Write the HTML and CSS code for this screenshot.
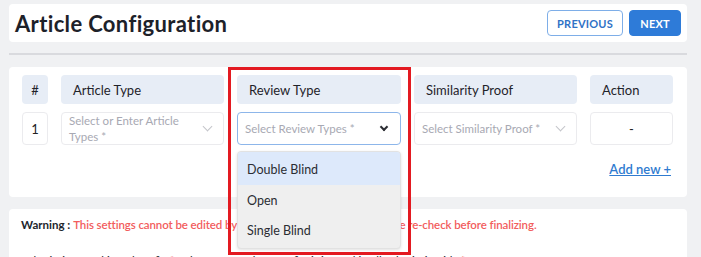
FILE: index.html
```html
<!DOCTYPE html>
<html lang="en">
  <head>
    <meta charset="UTF-8" />
    <meta name="viewport" content="width=device-width, initial-scale=1.0" />
    <title>Article Configuration</title>
    <link rel="stylesheet" href="styles.css">
  </head>

  <body>
    <div class="card topbar">
      <h1>Article Configuration</h1>
      <div class="nav">
        <button class="btn btn-outline">PREVIOUS</button>
        <button class="btn btn-solid">NEXT</button>
      </div>
    </div>

    <div class="divider"></div>

    <div class="card config">
      <div class="grid">
        <div class="head center">#</div>
        <div class="head">Article Type</div>
        <div class="head">Review Type</div>
        <div class="head">Similarity Proof</div>
        <div class="head">Action</div>

        <div class="cell center">1</div>
        <div class="cell select">
          <span class="placeholder two-line">Select or Enter Article Types *</span>
          <span class="chevron"></span>
        </div>
        <div class="cell select focused">
          <span class="placeholder">Select Review Types *</span>
          <span class="chevron dark"></span>
          <ul class="menu">
            <li class="hover">Double Blind</li>
            <li>Open</li>
            <li>Single Blind</li>
          </ul>
        </div>
        <div class="cell select">
          <span class="placeholder">Select Similarity Proof *</span>
          <span class="chevron"></span>
        </div>
        <div class="cell center">-</div>
      </div>
      <div class="add-row">
        <a href="#" class="add-link">Add new +</a>
      </div>
    </div>

    <div class="card notes">
      <p class="warning">
        <b>Warning :</b>
        <span class="red">This settings cannot be edited by anyone once it is saved, so please re-check before finalizing.</span>
      </p>
      <p class="note">
        Submission Tracking Id Prefix <span class="red">*</span> : Please use a short prefix, it is used in all submission ids <span class="red">*</span>
      </p>
    </div>

    <div class="highlight"></div>
  </body>
</html>
```

FILE: styles.css
```css
* {
  margin: 0;
  padding: 0;
  box-sizing: border-box;
  font-family: Lato, "Noto Sans", sans-serif;
}

body {
  background: #f0f1f3;
  color: #22252c;
  padding: 4px 14px 0 9px;
  overflow: hidden;
  height: 257px;
  position: relative;
}

.card {
  background: #ffffff;
  border-radius: 4px;
}

.topbar {
  height: 38px;
  display: flex;
  justify-content: space-between;
  align-items: center;
  padding: 0 6px 0 6px;
}

h1 {
  font-size: 22px;
  font-weight: 700;
  color: #1d2129;
  letter-spacing: 0.35px;
}

.nav {
  display: flex;
  gap: 6px;
}

.btn {
  height: 26px;
  border-radius: 4px;
  font-size: 11px;
  font-weight: 700;
  cursor: pointer;
  letter-spacing: 0.2px;
}

.btn-outline {
  width: 76px;
  background: #ffffff;
  border: 1px solid #7eaee8;
  color: #2f72c6;
}

.btn-solid {
  width: 52px;
  background: #2e7bd8;
  border: 1px solid #2e7bd8;
  color: #ffffff;
}

.divider {
  height: 2px;
  background: #d9dade;
  margin-top: 11px;
}

.config {
  margin-top: 12px;
  height: 130px;
  padding: 8px 13px 0 13px;
}

.grid {
  display: grid;
  grid-template-columns: 26px 163px 164px 163px 83px;
  grid-template-rows: 29px 33px;
  column-gap: 13px;
  row-gap: 8px;
}

.head {
  background: #e7edf6;
  border-radius: 4px;
  font-size: 13px;
  color: #1f232a;
  display: flex;
  align-items: center;
  padding-left: 12px;
}

.center {
  justify-content: center;
  padding-left: 0;
}

.cell {
  border: 1px solid #ebebee;
  border-radius: 4px;
  display: flex;
  align-items: center;
  font-size: 13px;
  color: #222;
}

.select {
  position: relative;
  padding: 0 10px 0 7px;
  justify-content: space-between;
}

.placeholder {
  font-size: 11.5px;
  color: #a8a9b3;
  line-height: 16px;
}

.two-line {
  width: 115px;
}

.focused {
  border-color: #8db6ea;
}

.chevron {
  width: 7px;
  height: 7px;
  border-right: 1.5px solid #c4c5ca;
  border-bottom: 1.5px solid #c4c5ca;
  transform: rotate(45deg);
  margin-top: -4px;
  margin-right: 2px;
}

.chevron.dark {
  border-color: #2b2d33;
  border-width: 2px;
  width: 6px;
  height: 6px;
  margin-right: 3px;
}

.menu {
  list-style: none;
  position: absolute;
  top: calc(100% + 7px);
  left: -1px;
  width: 164px;
  background: #efefef;
  border: 1px solid #e2e2e2;
  border-radius: 4px;
  box-shadow: 0 1px 3px rgba(0, 0, 0, 0.12);
  padding-bottom: 3px;
  z-index: 5;
  overflow: hidden;
}

.menu li {
  height: 30px;
  display: flex;
  align-items: center;
  padding-left: 9px;
  padding-top: 1px;
  font-size: 12.5px;
  color: #2b2d33;
}

.menu li.hover {
  height: 33px;
  background: #dde9fb;
}

.add-row {
  display: flex;
  justify-content: flex-end;
  padding-right: 3px;
  margin-top: 16px;
}

.add-link {
  font-size: 13px;
  font-weight: 600;
  color: #2f7bd0;
  text-decoration: underline;
}

.notes {
  margin-top: 12px;
  height: 80px;
  padding: 9px 12px;
}

.warning {
  font-size: 11.5px;
  color: #22252c;
}

.red {
  color: #f25d5d;
  font-weight: 600;
  letter-spacing: -0.1px;
}

.note {
  margin-top: 23px;
  font-size: 11.5px;
  color: #22252c;
}

.highlight {
  position: absolute;
  left: 228px;
  top: 67px;
  width: 183px;
  height: 188px;
  border: 3px solid #e31a21;
  z-index: 10;
  pointer-events: none;
}
```
